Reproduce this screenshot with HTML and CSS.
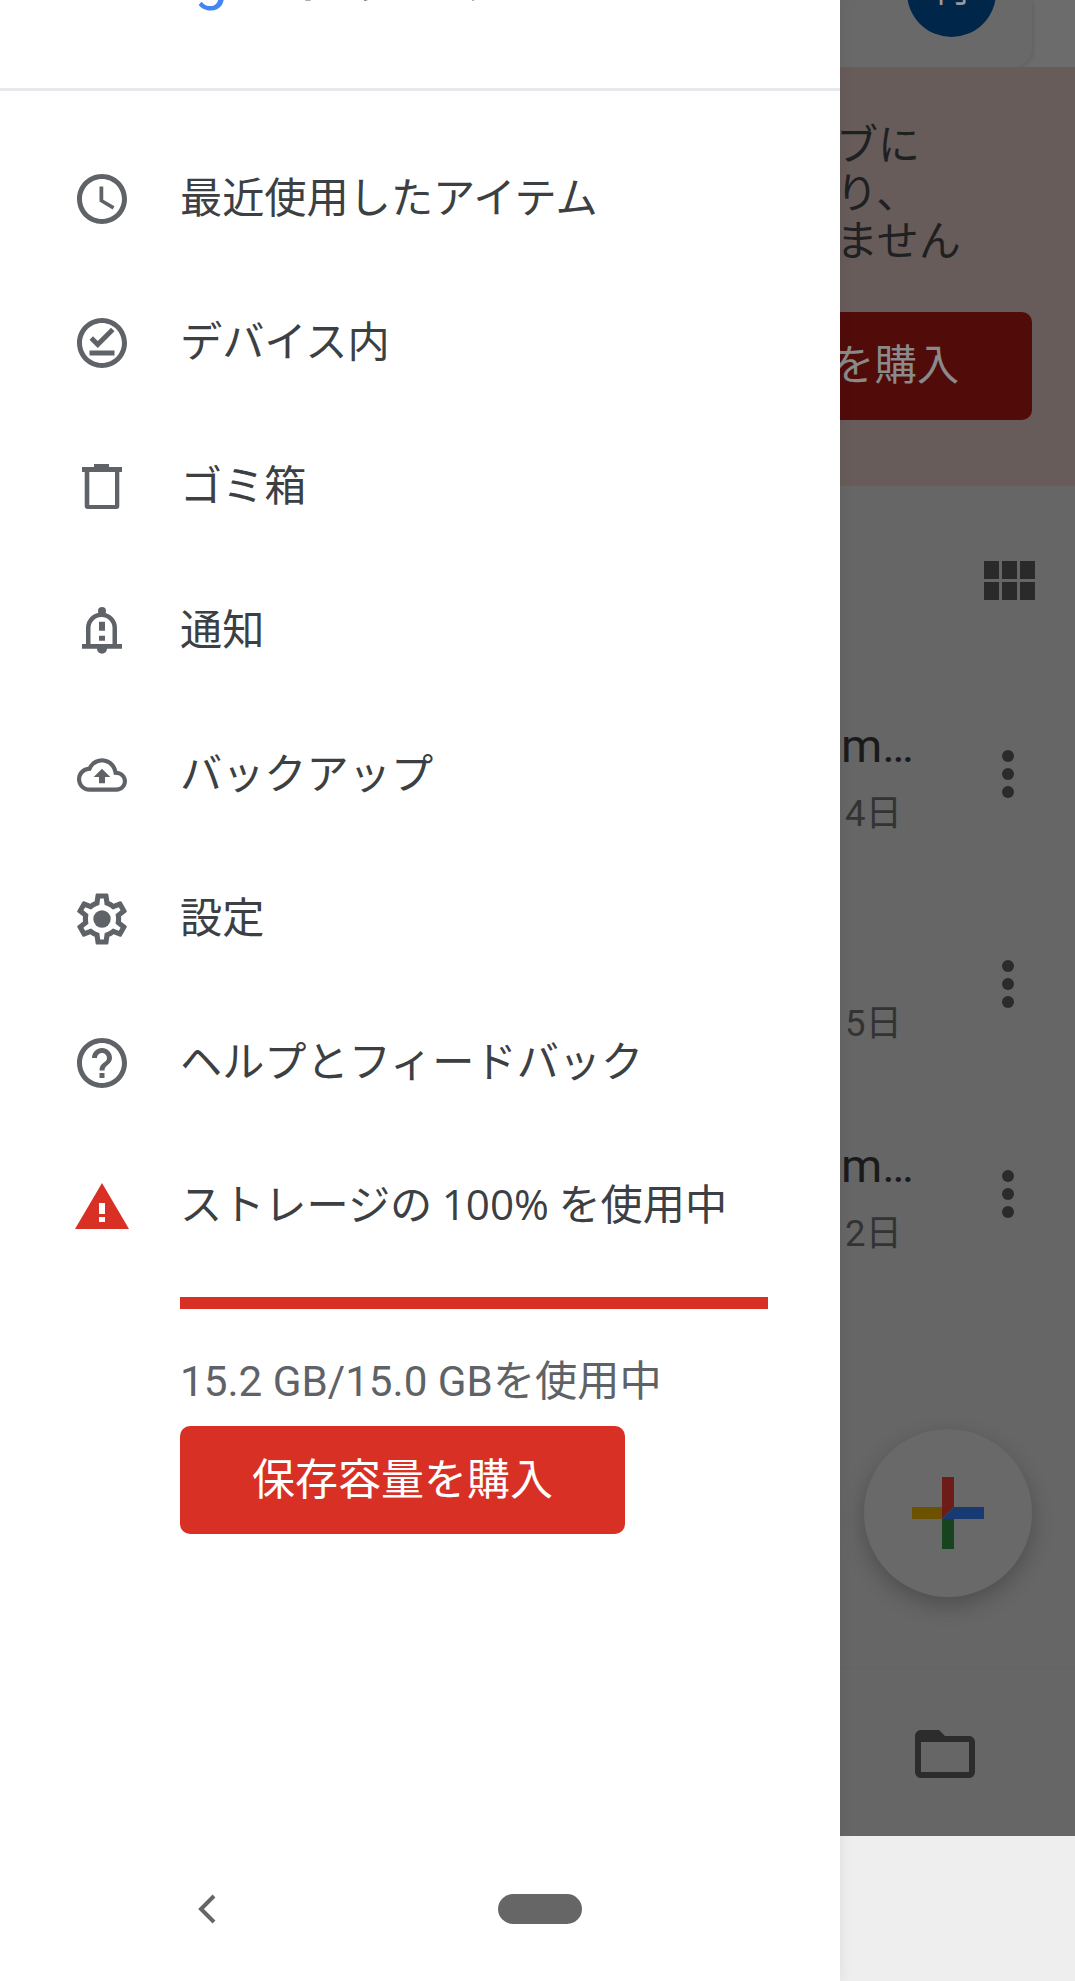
FILE: index.html
```html
<!DOCTYPE html>
<html lang="ja">
<head>
<meta charset="utf-8">
<title>Google ドライブ</title>
<link rel="stylesheet" href="styles.css">
</head>
<body>
<div class="screen">
  <aside class="drawer">
    <header class="drawer-head">
      <div class="brand">
        <span class="g-blue">G</span><span class="g-red">o</span><span class="g-yellow">o</span><span class="g-blue">g</span><span class="g-green">l</span><span class="g-red">e</span>
        <span class="brand-name">ドライブ</span>
      </div>
    </header>
    <nav class="menu">
      <a class="item">
        <svg class="ico" viewBox="0 0 24 24"><path d="M11.99 2C6.47 2 2 6.48 2 12s4.47 10 9.99 10C17.52 22 22 17.52 22 12S17.52 2 11.99 2zM12 20c-4.42 0-8-3.58-8-8s3.58-8 8-8 8 3.58 8 8-3.58 8-8 8zm.5-13H11v6l5.25 3.15.75-1.23-4.5-2.67z"/></svg>
        <span class="label">最近使用したアイテム</span>
      </a>
      <a class="item">
        <svg class="ico" viewBox="0 0 24 24"><path d="M12 2C6.5 2 2 6.5 2 12s4.5 10 10 10 10-4.5 10-10S17.5 2 12 2zm0 18c-4.41 0-8-3.59-8-8s3.59-8 8-8 8 3.59 8 8-3.59 8-8 8z"/><path d="M17 17H7v-2h10zM10.3 14L7 10.7l1.4-1.4 1.9 1.9 5.3-5.3L17 7.3z"/></svg>
        <span class="label">デバイス内</span>
      </a>
      <a class="item">
        <svg class="ico" viewBox="0 0 60 60"><path fill-rule="evenodd" d="M22 7h15v3h13v5h-2.7v34a3 3 0 0 1-3 3H15.7a3 3 0 0 1-3-3V15H10v-5h12zM17.3 15v33H43V15z"/></svg>
        <span class="label">ゴミ箱</span>
      </a>
      <a class="item">
        <svg class="ico" viewBox="0 0 60 60"><circle cx="30" cy="10" r="4"/><path fill-rule="evenodd" d="M14 43V27a15.500 15.500 0 0 1 31 0v16zM18.500 43h22V27a11 11 0 0 0-22 0z"/><path d="M10 43h40v4.700H10zM25 47.700h10a5 5 0 0 1-10 0zM27 20.700h6v9h-6zM27 34.700h6v5h-6z"/></svg>
        <span class="label">通知</span>
      </a>
      <a class="item">
        <svg class="ico" viewBox="-2.400 -2.400 28.800 28.800"><path d="M19.350 10.040C18.670 6.590 15.640 4 12 4 9.110 4 6.600 5.640 5.350 8.040 2.340 8.360 0 10.910 0 14c0 3.310 2.690 6 6 6h13c2.760 0 5-2.240 5-5 0-2.640-2.050-4.780-4.650-4.960zM19 18H6c-2.210 0-4-1.790-4-4 0-2.050 1.530-3.760 3.560-3.970l1.070-.11.500-.95C8.080 7.140 9.940 6 12 6c2.620 0 4.880 1.860 5.390 4.430l.3 1.500 1.530.11c1.560.1 2.780 1.410 2.780 2.960 0 1.650-1.350 3-3 3zM8 13h2.550v3h2.900v-3H16l-4-4z"/></svg>
        <span class="label">バックアップ</span>
      </a>
      <a class="item">
        <svg class="ico" viewBox="0.250 0.250 23.500 23.500"><path d="M19.430 12.980c.04-.32.07-.64.07-.98 0-.34-.03-.66-.07-.98l2.110-1.650c.19-.15.24-.42.12-.64l-2-3.460c-.09-.16-.26-.25-.44-.25-.06 0-.12.01-.17.03l-2.490 1c-.52-.4-1.080-.73-1.690-.98l-.38-2.650C14.460 2.180 14.250 2 14 2h-4c-.25 0-.46.18-.49.42l-.38 2.650c-.61.25-1.170.59-1.690.98l-2.490-1c-.06-.02-.12-.03-.18-.03-.17 0-.34.09-.43.25l-2 3.460c-.13.22-.07.49.12.64l2.110 1.650c-.04.32-.07.65-.07.98 0 .33.03.66.07.98l-2.110 1.650c-.19.15-.24.42-.12.64l2 3.460c.09.16.26.25.44.25.06 0 .12-.01.17-.03l2.490-1c.52.4 1.080.73 1.690.98l.38 2.650c.03.24.24.42.49.42h4c.25 0 .46-.18.49-.42l.38-2.650c.61-.25 1.170-.59 1.690-.98l2.490 1c.06.02.12.03.18.03.17 0 .34-.09.43-.25l2-3.460c.12-.22.07-.49-.12-.64l-2.110-1.650zm-1.980-1.710c.04.31.05.52.05.73 0 .21-.02.43-.05.73l-.14 1.130.89.7 1.080.84-.7 1.210-1.270-.51-1.040-.42-.9.68c-.43.32-.84.56-1.250.73l-1.060.43-.16 1.130-.2 1.350h-1.400l-.19-1.350-.16-1.130-1.060-.43c-.43-.18-.83-.41-1.230-.71l-.91-.7-1.060.43-1.270.51-.7-1.210 1.080-.84.89-.7-.14-1.130c-.03-.31-.05-.54-.05-.74s.02-.43.05-.73l.14-1.130-.89-.7-1.080-.84.7-1.210 1.270.51 1.040.42.9-.68c.43-.32.84-.56 1.250-.73l1.060-.43.16-1.130.2-1.350h1.390l.19 1.350.16 1.130 1.060.43c.43.18.83.41 1.230.71l.91.7 1.060-.43 1.270-.51.7 1.210-1.070.85-.89.7.14 1.130z"/><circle cx="12" cy="12" r="3.400"/></svg>
        <span class="label">設定</span>
      </a>
      <a class="item">
        <svg class="ico" viewBox="0 0 24 24"><path d="M11 18h2v-2h-2v2zm1-16C6.480 2 2 6.480 2 12s4.480 10 10 10 10-4.480 10-10S17.520 2 12 2zm0 18c-4.410 0-8-3.590-8-8s3.590-8 8-8 8 3.590 8 8-3.590 8-8 8zm0-14c-2.210 0-4 1.790-4 4h2c0-1.100.9-2 2-2s2 .9 2 2c0 2-3 1.750-3 5h2c0-2.250 3-2.500 3-5 0-2.210-1.790-4-4-4z"/></svg>
        <span class="label">ヘルプとフィードバック</span>
      </a>
      <a class="item">
        <svg class="ico ico-warn" viewBox="0 0 60 60"><path fill-rule="evenodd" d="M3 52L30 6l27 46zM27 26v11h6V26zM27 40v5h6v-5z"/></svg>
        <span class="label">ストレージの <span class="pct">100%</span> を使用中</span>
      </a>
    </nav>
    <section class="storage">
      <div class="meter"></div>
      <p class="usage">15.2 GB/15.0 GBを使用中</p>
      <a class="buy">保存容量を購入</a>
    </section>
    <div class="sysnav">
      <svg class="back" viewBox="0 0 18 30"><path d="M16 2L3 15l13 13"/></svg>
      <span class="pill"></span>
    </div>
  </aside>

  <main class="behind">
    <div class="topbar">
      <div class="searchcard">
        <div class="avatar">何</div>
      </div>
    </div>
    <section class="banner">
      <p class="banner-text">ブに<br>り、<br>ません</p>
      <a class="banner-buy">を購入</a>
    </section>
    <div class="viewbar">
      <svg class="gridico" viewBox="0 0 51 39"><path d="M0 0h15v18H0zM18 0h15v18H18zM36 0h15v18H36zM0 21h15v18H0zM18 21h15v18H18zM36 21h15v18H36z"/></svg>
    </div>
    <div class="file">
      <div class="file-text"><div class="file-name">m…</div><div class="file-date">4日</div></div>
      <div class="kebab"><i></i><i></i><i></i></div>
    </div>
    <div class="file">
      <div class="file-text"><div class="file-name">&nbsp;</div><div class="file-date">5日</div></div>
      <div class="kebab"><i></i><i></i><i></i></div>
    </div>
    <div class="file">
      <div class="file-text"><div class="file-name">m…</div><div class="file-date">2日</div></div>
      <div class="kebab"><i></i><i></i><i></i></div>
    </div>
    <div class="fab">
      <svg class="plus" viewBox="0 0 72 72">
        <path fill="#6e1c17" d="M30 0h12v30L30 42z"/>
        <path fill="#6b5100" d="M0 30h30v12H0z"/>
        <path fill="#173a73" d="M42 30h30v12H30z"/>
        <path fill="#16441f" d="M30 42h12v30H30z"/>
      </svg>
    </div>
    <div class="tabbar">
      <svg class="folder" viewBox="0 0 24 24"><path d="M20 6h-8l-2-2H4c-1.100 0-1.990.9-1.990 2L2 18c0 1.100.9 2 2 2h16c1.100 0 2-.9 2-2V8c0-1.100-.9-2-2-2zm0 12H4V8h16v10z"/></svg>
    </div>
    <div class="gesture"></div>
  </main>
</div>
</body>
</html>
```

FILE: styles.css
```css
* { box-sizing: border-box; }
html, body { margin: 0; padding: 0; background: #fff; }
body { font-family: "Noto Sans CJK JP", "Noto Sans", sans-serif; }
p { margin: 0; }

.screen { width: 1075px; height: 1981px; display: flex; overflow: hidden; }

/* drawer */
.drawer {
  width: 840px; height: 1981px; flex: none; background: #fff;
  display: flex; flex-direction: column;
  position: relative; z-index: 2;
  box-shadow: 0 0 12px rgba(0, 0, 0, .08);
}
.drawer-head { height: 91px; flex: none; overflow: hidden; border-bottom: 3px solid #e8e8ec; }
.brand {
  display: flex; align-items: baseline; margin-top: -56px; padding-left: 85px;
  font-family: Roboto, sans-serif; font-size: 60px; line-height: 60px; white-space: nowrap;
}
.brand .brand-name {
  font-family: "Noto Sans CJK JP", sans-serif; font-size: 56px; color: #5f6368; margin-left: 14px;
}
.g-blue { color: #4285f4; }
.g-red { color: #ea4335; }
.g-yellow { color: #fbbc04; }
.g-green { color: #34a853; }

.menu { padding-top: 36px; }
.item {
  height: 144px; display: flex; align-items: center; gap: 48px; padding-left: 72px;
  font-size: 42.2px; line-height: 60px; color: #3c4043; white-space: nowrap;
}
.label { padding-bottom: 8px; }
.pct { font-family: "Open Sans", sans-serif; }
.ico { width: 60px; height: 60px; flex: none; fill: #5f6368; }
.ico-warn { fill: #d93025; }

.storage { padding-left: 180px; padding-top: 18px; }
.meter { width: 588px; height: 12px; background: #d93025; }
.usage {
  margin-top: 47px; margin-bottom: 18px;
  font-family: Roboto, "Noto Sans CJK JP", sans-serif; font-size: 42.2px; line-height: 52px; color: #5f6368;
}
.buy {
  width: 445px; height: 108px; padding-bottom: 8px; border-radius: 10px; background: #d93025; color: #fff;
  display: flex; align-items: center; justify-content: center; font-size: 43px; line-height: 60px;
}

.sysnav {
  margin-top: auto; padding: 0 0 57px 196px; display: flex; align-items: center; gap: 280px;
}
.back { width: 22px; height: 30px; flex: none; fill: none; stroke: #666; stroke-width: 4; }
.pill { width: 84px; height: 30px; border-radius: 15px; background: #666; }

/* content dimmed behind the drawer */
.behind {
  width: 235px; height: 1981px; flex: none; background: #666; overflow: hidden;
  display: flex; flex-direction: column;
}
.topbar { height: 67px; flex: none; background: #6c6c6c; }
.searchcard {
  height: 67px; margin-right: 43px; background: #696969; border-radius: 0 0 18px 0;
  box-shadow: 1px 1px 4px rgba(0, 0, 0, .12);
  display: flex; justify-content: flex-end; padding-right: 36px;
}
.avatar {
  width: 89px; height: 89px; margin-top: -52px; border-radius: 50%; background: #00264a;
  color: #9a9a9a; font-size: 36px; line-height: 76px; text-align: center; flex: none;
}
.banner { height: 419px; flex: none; background: #675c5a; padding-top: 51px; }
.banner-text { margin-left: -4px; font-size: 42px; line-height: 48px; color: #1f2022; white-space: nowrap; }
.banner-buy {
  display: flex; align-items: center; height: 108px; margin: 50px 43px 0 -16px; padding: 0 0 8px 8px;
  border-radius: 10px; background: #510c0a; color: #8a8a8a; font-size: 42.4px; line-height: 60px;
}
.viewbar { height: 183px; flex: none; padding-top: 75px; display: flex; justify-content: flex-end; padding-right: 40px; }
.gridico { width: 51px; height: 39px; fill: #2a2a2a; }

.file { height: 210px; flex: none; display: flex; align-items: center; justify-content: space-between; padding-right: 61px; }
.file-text { padding-top: 4px; }
.file-name { font-family: Roboto, sans-serif; font-size: 47px; line-height: 60px; color: #1a1a1a; margin-left: 1px; }
.file-date { font-family: Roboto, "Noto Sans CJK JP", sans-serif; font-size: 36.5px; line-height: 44px; color: #333; margin: 16px 0 0 5px; }
.kebab { display: flex; flex-direction: column; gap: 6px; }
.kebab i { display: block; width: 12px; height: 12px; border-radius: 50%; background: #2b2b2b; }

.fab {
  width: 168px; height: 168px; flex: none; margin: 130px 0 70px 24px; border-radius: 50%; background: #696969;
  box-shadow: 0 8px 22px rgba(0, 0, 0, .24);
  display: flex; align-items: center; justify-content: center;
}
.plus { width: 72px; height: 72px; }
.tabbar { height: 169px; flex: none; border-top: 1px solid #636363; padding: 50px 0 0 69px; }
.folder { display: block; width: 72px; height: 72px; fill: #2c2c2c; }
.gesture { flex: 1; background: #eee; }
```
